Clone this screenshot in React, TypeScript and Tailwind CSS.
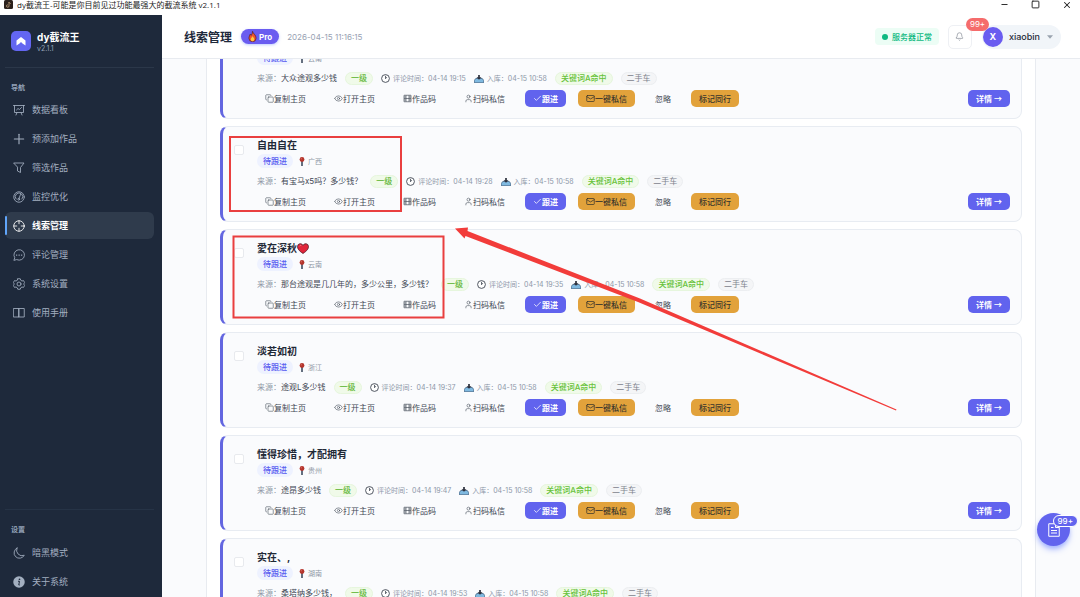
import type { ReactNode } from "react";
import { Bell, Check, Copy, Eye, Mail, Minus, Plus, Square, User, X } from "lucide-react";

type Lead = { name?: string; heart?: boolean; place: string; text: string; time: string };

const leads: Lead[] = [
  { place: "云南", text: "大众途观多少钱", time: "04-14 19:15" },
  { name: "自由自在", place: "广西", text: "有宝马x5吗？多少钱？", time: "04-14 19:28" },
  { name: "愛在深秋", heart: true, place: "云南", text: "那台途观是几几年的，多少公里，多少钱？", time: "04-14 19:35" },
  { name: "淡若如初", place: "浙江", text: "途观L多少钱", time: "04-14 19:37" },
  { name: "懂得珍惜，才配拥有", place: "贵州", text: "途昂多少钱", time: "04-14 19:47" },
  { name: "实在、,", place: "湖南", text: "桑塔纳多少钱，", time: "04-14 19:53" },
];

function Line({ children }: { children: ReactNode }) {
  return (
    <svg viewBox="0 0 24 24" className="size-3 shrink-0" fill="none" stroke="currentColor" strokeWidth="1.7" strokeLinecap="round" strokeLinejoin="round" aria-hidden="true">
      {children}
    </svg>
  );
}

const nav: { label: string; icon: ReactNode; active?: boolean }[] = [
  { label: "数据看板", icon: <Line><path d="M1 3h22M3 3v14h18V3M8 17l-2 5M16 17l2 5M7 12l3-3 3 2 4-4" /></Line> },
  { label: "预添加作品", icon: <Plus className="size-3" strokeWidth={1.7} viewBox="3 3 18 18" /> },
  { label: "筛选作品", icon: <Line><path d="M2 2h20l-7 9v10l-6-3v-7z" /></Line> },
  { label: "监控优化", icon: <Line><circle cx="12" cy="12" r="10.5" /><path d="M6 16a7.500 7.500 0 1 1 12 0M12 15l3-8" /><circle cx="11.500" cy="16.500" r="1.800" /></Line> },
  { label: "线索管理", active: true, icon: <Line><circle cx="12" cy="12" r="10.5" /><path d="M12 1.500v6M12 16.500v6M1.500 12h6M16.500 12h6" /></Line> },
  { label: "评论管理", icon: <Line><path d="M2 22l1.500-4.500A10.500 10.500 0 1 1 8 21.500z" /><path d="M7 12h.5M12 12h.5M17 12h.5" strokeWidth="2.500" /></Line> },
  { label: "系统设置", icon: <Line><path d="M9.500 1.500h5l1 3 2.500 1.500 3-.8 2.500 4.300-2.200 2.300v.4l2.200 2.300-2.500 4.300-3-.8-2.500 1.500-1 3h-5l-1-3L6 18l-3 .8-2.500-4.300 2.200-2.300v-.4L.5 9.500 3 5.200 6 6l2.500-1.500z" /><circle cx="12" cy="12" r="4" /></Line> },
  { label: "使用手册", icon: <Line><path d="M1.500 3H12v17H1.500zM12 3h10.500v17H12z" /></Line> },
];

function NavItem({ label, icon, active }: { label: string; icon: ReactNode; active?: boolean }) {
  return (
    <a
      href="#"
      className={
        active
          ? "relative flex h-[27px] items-center gap-[7px] rounded-md bg-[#2f3b4c] pl-2 font-bold text-white"
          : "relative flex h-[27px] items-center gap-[7px] rounded-md pl-2 text-[#a3afc0]"
      }
    >
      {active && <span className="absolute top-1 bottom-1 left-0 w-0.5 rounded-full bg-[#60a5fa]" />}
      {icon}
      <span>{label}</span>
    </a>
  );
}

function Pin() {
  return (
    <svg viewBox="0 0 8 12" className="h-[9px] w-1.5" aria-hidden="true">
      <rect x="3" y="5" width="2" height="7" fill="#334155" />
      <circle cx="4" cy="3.300" r="3.200" fill="#b5352c" />
      <circle cx="3" cy="2.300" r="0.800" fill="#e58b80" />
    </svg>
  );
}

function Clock() {
  return (
    <svg viewBox="0 0 20 20" className="size-[9px]" fill="none" aria-hidden="true">
      <circle cx="10" cy="10" r="8.700" stroke="#3f4652" strokeWidth="2" fill="#fff" />
      <path d="M10 4v6.500L13 7" stroke="#3f4652" strokeWidth="1.800" />
    </svg>
  );
}

function Inbox() {
  return (
    <svg viewBox="0 0 20 18" className="h-[9px] w-2.5" aria-hidden="true">
      <path d="M3.500 9h13l3 4v4.500H.5V13z" fill="#7fb9e0" stroke="#28486a" strokeWidth="1.300" />
      <path d="M8.300 2h3.400v4.500H15l-5 5-5-5h3.300z" fill="#2b2f3c" />
    </svg>
  );
}

function QrGrid() {
  return (
    <svg viewBox="0 0 18 18" className="size-[9px] shrink-0" fill="none" stroke="currentColor" strokeWidth="1.300" aria-hidden="true">
      <path d="M2 2.500h14v13H2zM6 2.500v13M12 2.500v13M6 9h6M2 6h4M2 9h4M2 12h4M12 6h4M12 9h4M12 12h4" />
    </svg>
  );
}

function Heart() {
  return (
    <svg viewBox="0 0 24 22" className="h-[11px] w-3" aria-hidden="true">
      <path d="M12 21C3 15 1 11 1 7a5.700 5.700 0 0 1 11-2 5.700 5.700 0 0 1 11 2c0 4-2 8-11 14z" fill="#e0263a" stroke="#4a1620" strokeWidth="1.500" />
      <path d="M5 6.500C6 4.500 7.500 4.500 8.500 5" stroke="#ff9aa4" strokeWidth="1.500" fill="none" />
    </svg>
  );
}

function Flame() {
  return (
    <svg viewBox="0 0 20 24" className="h-[11px] w-[9px]" aria-hidden="true">
      <path d="M10 .5c1 5 8 8 8 15a8 8 0 0 1-16 0c0-4 2-6 3-9 1 1 1.500 2 2 3 2-2 3-5 3-9z" fill="#f0542d" stroke="#4b1c1c" strokeWidth="1.400" />
      <path d="M10 11c1 3 4 4 4 7.500a4 4 0 0 1-8 0c0-3 3-4.500 4-7.500z" fill="#ffc83d" />
    </svg>
  );
}

const plain = "flex h-[17px] items-center rounded-[5px] px-2 text-[#3f4754]";
const amber = "flex h-[17px] items-center rounded-[5px] bg-[#e2a23b] px-2 font-medium text-[#3a352c]";
const indigo = "flex h-[17px] items-center rounded-[5px] bg-[#6163ee] px-2 font-bold text-white";
const glyph = "size-[9px] shrink-0";

function LeadCard({ lead }: { lead: Lead }) {
  return (
    <li className="flex h-24 shrink-0 rounded-lg border border-l-[3px] border-[#e8ecf2] border-l-[#6366e0] bg-[#fafbfd] pr-[11px] pl-[11px]">
      <input
        type="checkbox"
        aria-label={lead.name ?? lead.text}
        className="mt-[18px] size-2.5 shrink-0 appearance-none rounded-xs border border-[#e8eaee] bg-white"
      />
      <div className="ml-[13px] flex min-w-0 flex-1 flex-col pt-3 text-[8px]">
        <h2 className="flex h-3 items-center text-[10px] font-bold text-[#1f2937]">
          {lead.name}
          {lead.heart && <Heart />}
        </h2>
        <div className="mt-[3px] flex h-3.5 items-center">
          <span className="flex h-3.5 items-center rounded-full bg-[#eef2ff] px-[6px] font-medium text-[#5a5cf0]">待跟进</span>
          <span className="ml-[6px] flex items-center gap-[3px] text-[7px] text-[#8f98a6]">
            <Pin />
            {lead.place}
          </span>
        </div>
        <div className="mt-[6px] flex h-3.5 items-center gap-2 whitespace-nowrap">
          <p className="text-[#3f4754]">
            <span className="text-[#8f98a6]">来源：</span>
            {lead.text}
          </p>
          <span className="flex h-[13px] items-center rounded-full border border-[#e6f6dd] bg-[#f0fae9] px-[5px] font-medium text-[#67b83d]">一级</span>
          <span className="flex items-center gap-[3px] text-[7px] text-[#8d97a8]">
            <Clock />
            评论时间：{lead.time}
          </span>
          <span className="flex items-center gap-[3px] text-[7px] text-[#8d97a8]">
            <Inbox />
            入库：04-15 10:58
          </span>
          <span className="flex h-[13px] items-center rounded-full border border-[#e6f6dd] bg-[#f0fae9] px-[5px] font-medium text-[#67c23a]">关键词A命中</span>
          <span className="flex h-[13px] items-center rounded-full border border-[#eceef1] bg-[#f4f5f7] px-[5px] text-[#7d838d]">二手车</span>
        </div>
        <div className="mt-[5px] flex items-center gap-3 whitespace-nowrap">
          <button type="button" className={plain}><Copy className={glyph} strokeWidth={1.5} />复制主页</button>
          <button type="button" className={plain}><Eye className={glyph} strokeWidth={1.5} />打开主页</button>
          <button type="button" className={plain}><QrGrid />作品码</button>
          <button type="button" className={plain}><User className={glyph} strokeWidth={1.5} />扫码私信</button>
          <button type="button" className={indigo}><Check className={glyph} strokeWidth={2} />跟进</button>
          <button type="button" className={amber}><Mail className={glyph} strokeWidth={2} />一键私信</button>
          <button type="button" className={plain}>忽略</button>
          <button type="button" className={amber}>标记同行</button>
          <button type="button" className="ml-auto flex h-[17px] items-center gap-0.5 rounded-[5px] bg-[#6163ee] px-2 font-bold text-white">
            详情<span className="font-['Noto_Sans_CJK_SC',sans-serif]">→</span>
          </button>
        </div>
      </div>
    </li>
  );
}

export default function App() {
  return (
    <div className="relative flex h-screen flex-col overflow-hidden bg-white font-[Inter,'Noto_Sans_CJK_SC',sans-serif] leading-none">
      <div className="flex h-[15px] shrink-0 items-center justify-between pr-2 pb-[6px] pl-1 text-[#222]">
        <div className="flex items-center gap-1 font-['Open_Sans','Noto_Sans_CJK_SC',sans-serif] text-[8px] whitespace-nowrap">
          <svg viewBox="0 0 18 18" className="size-[9px]" aria-hidden="true">
            <rect width="18" height="18" rx="3" fill="#2b211c" />
            <path d="M10 4v8a2.500 2.500 0 1 1-2.500-2.500M10 4c0 2 2 3 3.500 3" stroke="#c9a880" strokeWidth="1.500" fill="none" />
          </svg>
          dy截流王-可能是你目前见过功能最强大的截流系统 v2.1.1
        </div>
        <div className="flex items-center gap-[22px]">
          <button type="button" aria-label="最小化"><Minus className="size-[9px]" strokeWidth={2.5} /></button>
          <button type="button" aria-label="最大化"><Square className="size-[9px]" strokeWidth={2.5} /></button>
          <button type="button" aria-label="关闭"><X className="size-[10px]" strokeWidth={2.5} /></button>
        </div>
      </div>

      <div className="flex min-h-0 flex-1">
        <aside className="flex w-[162px] shrink-0 flex-col bg-[#1e293b] pr-2 pl-[5px] text-[9px]">
          <div className="flex h-[53px] items-center gap-[6px] border-b border-[#2b3749] pl-[6px]">
            <span className="flex size-5 items-center justify-center rounded-[5px] bg-[#6366f1]">
              <svg viewBox="0 0 20 20" className="size-2.5" fill="#fff" aria-hidden="true">
                <path d="M10 2l9 7v10l-6-4-3-3-3 3-6 4V9z" />
              </svg>
            </span>
            <div className="pt-0.5">
              <p className="text-[10px] font-bold text-white">dy截流王</p>
              <p className="mt-[3px] text-[7px] text-[#94a3b8]">v2.1.1</p>
            </div>
          </div>
          <p className="mt-4 pl-[6px] text-[7px] font-bold text-[#94a3b8]">导航</p>
          <nav className="mt-[5px] flex flex-col gap-0.5">
            {nav.map((item) => <NavItem key={item.label} {...item} />)}
          </nav>
          <div className="mt-auto border-t border-[#263346] pt-4 pb-0.5">
            <p className="pl-[6px] text-[7px] font-bold text-[#94a3b8]">设置</p>
            <div className="mt-[6px] flex flex-col gap-0.5">
              <NavItem label="暗黑模式" icon={<Line><path d="M8 2A10.800 10.800 0 1 0 22.500 16.500 11 11 0 0 1 8 2z" /></Line>} />
              <NavItem
                label="关于系统"
                icon={
                  <svg viewBox="0 0 24 24" className="size-3" aria-hidden="true">
                    <circle cx="12" cy="12" r="11.500" fill="#a3afc0" />
                    <circle cx="13" cy="6.500" r="1.700" fill="#1e293b" />
                    <path d="M10 10.500h3l-1.500 7.500h2" stroke="#1e293b" strokeWidth="2" fill="none" />
                  </svg>
                }
              />
            </div>
          </div>
        </aside>

        <div className="flex min-w-0 flex-1 flex-col">
          <header className="flex h-11 shrink-0 items-center border-b border-[#e8ebf0] pr-[19px] pl-[22px] text-[8px]">
            <h1 className="pt-0.5 text-[12px] font-bold text-[#1e293b]">线索管理</h1>
            <span className="ml-[9px] flex h-[15px] items-center gap-0.5 rounded-full bg-[#6a5cf0] px-[7px] text-[8px] font-bold text-white shadow-sm shadow-indigo-200">
              <Flame />
              Pro
            </span>
            <time className="ml-2 text-[8px] text-[#98a2b3]">2026-04-15 11:16:15</time>
            <span className="ml-auto flex h-[17px] items-center gap-1 rounded-[4px] bg-[#ecfdf5] px-[7px] font-medium text-[#10b981]">
              <span className="size-[6px] rounded-full bg-[#10b981]" />
              服务器正常
            </span>
            <button type="button" aria-label="通知" className="relative ml-[9px] flex size-6 items-center justify-center rounded-[5px] border border-[#eef0f4] bg-white text-[#7d838d]">
              <Bell className="size-[9px]" strokeWidth={1.7} />
              <span className="absolute -top-2 left-[17px] z-10 flex h-[13px] items-center rounded-full bg-[#f56c6c] px-1 text-[8px] text-white">99+</span>
            </button>
            <button type="button" className="ml-2.5 flex h-6 items-center rounded-full bg-[#f1f5f9] pr-2 pl-px text-[9px] font-medium text-[#1f2937]">
              <span className="flex size-5 items-center justify-center rounded-full bg-[#6a5cf0] font-bold text-white">X</span>
              <span className="ml-[6px]">xiaobin</span>
              <svg viewBox="0 0 10 6" className="ml-[7px] h-1 w-[6px]" fill="#9aa3af" aria-hidden="true"><path d="M0 0h10L5 6z" /></svg>
            </button>
          </header>

          <main className="min-h-0 flex-1 overflow-hidden bg-[#fafbfd] px-11">
            <ul className="-mt-9 flex flex-col gap-[7px] border-x border-[#e8ebf0] bg-white px-[13px]">
              {leads.map((lead) => <LeadCard key={lead.time} lead={lead} />)}
            </ul>
          </main>
        </div>
      </div>

      <button type="button" aria-label="任务列表" className="absolute right-2.5 bottom-[51px] flex size-[33px] items-center justify-center rounded-full bg-[#6264ee] text-white shadow-md shadow-indigo-300">
        <svg viewBox="0 0 24 28" className="h-3.5 w-3" fill="none" stroke="currentColor" strokeWidth="2" aria-hidden="true">
          <path d="M1.500 1.500h14l7 7v18h-21zM15 2v7h7M6 9h5M6 15h12M6 20h12" />
        </svg>
        <span className="absolute top-0.5 -right-2 flex h-3 items-center rounded-full border border-white bg-[#6264ee] px-1 text-[8px] font-medium">99+</span>
      </button>

      <svg className="pointer-events-none absolute top-0 left-0 h-[597px] w-[1080px]" viewBox="0 0 1080 597" fill="none" aria-hidden="true">
        <rect x="230" y="137" width="171" height="74" stroke="#e93f3f" strokeWidth="2" />
        <rect x="233.500" y="236.500" width="210" height="81" stroke="#e93f3f" strokeWidth="2" />
        <path d="M455 228.500L468 227.500 467.500 231 640 298.500 896.500 409.500 896 410.500 638 302 465.500 236 464.500 238.500z" fill="#f23c3a" />
      </svg>
    </div>
  );
}
